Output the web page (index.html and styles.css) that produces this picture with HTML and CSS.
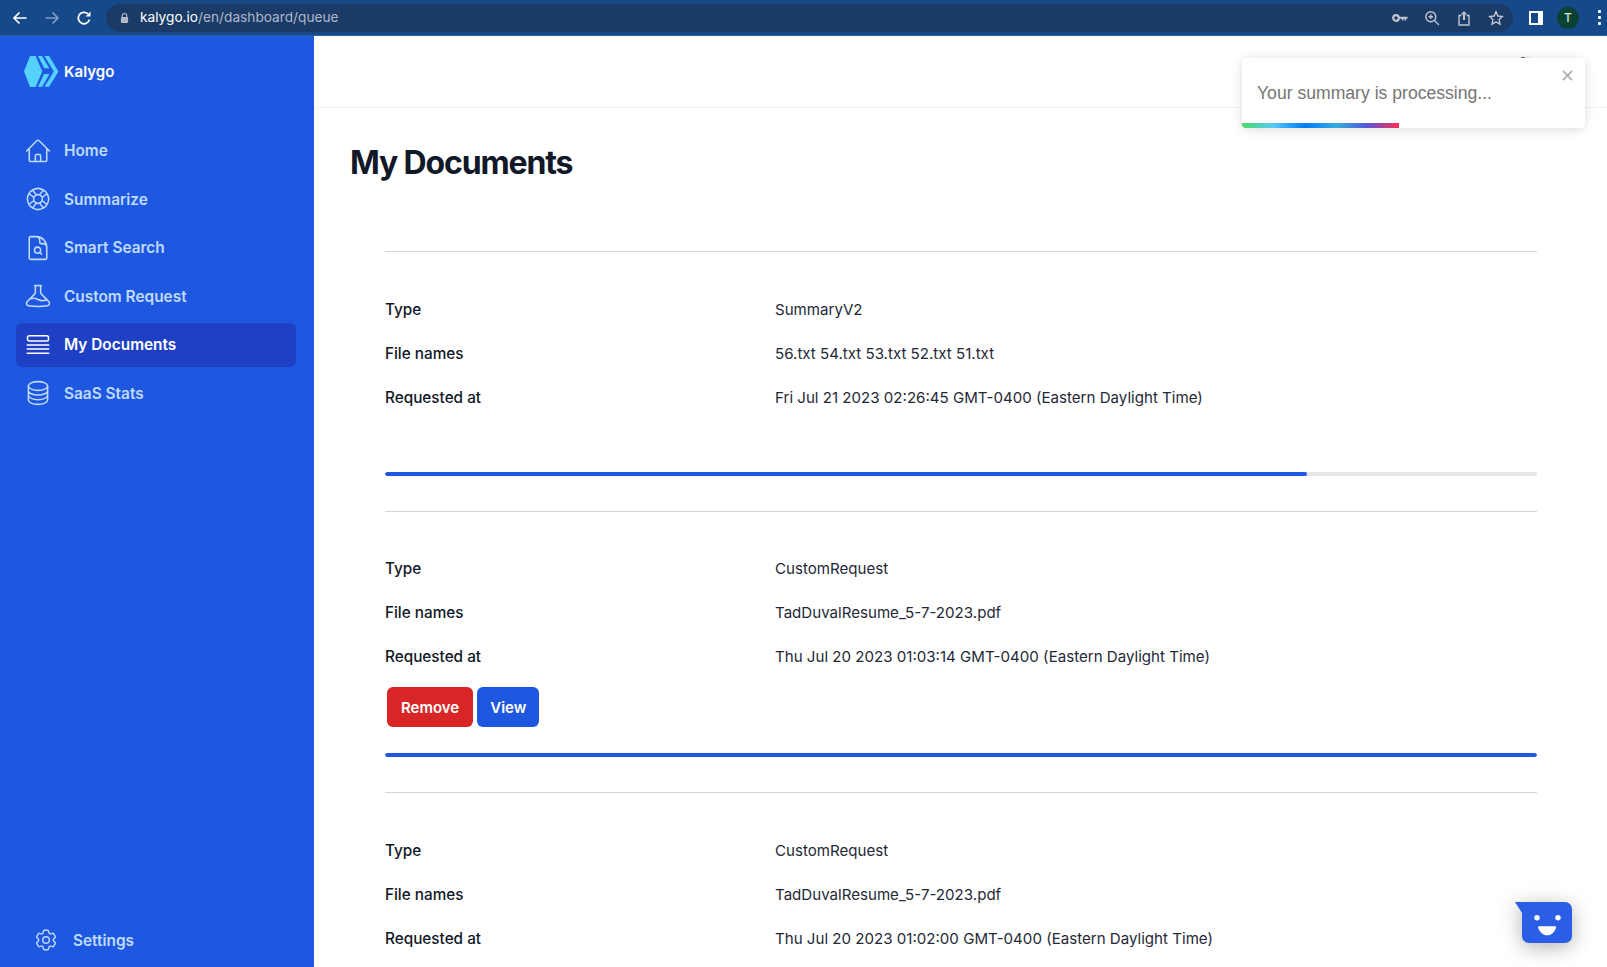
FILE: index.html
```html
<!DOCTYPE html>
<html lang="en">
<head>
<meta charset="utf-8">
<title>Kalygo</title>
<link rel="stylesheet" href="styles.css">
</head>
<body>
<div class="browser-bar">
  <svg class="tb-icon nav-back" viewBox="0 0 16 16"><path d="M14.5 8H2.5M7.5 2.5 2 8l5.5 5.5"/></svg>
  <svg class="tb-icon nav-fwd" viewBox="0 0 16 16"><path d="M1.500 8h12M8.500 2.500 14 8l-5.500 5.500"/></svg>
  <svg class="tb-icon nav-reload" viewBox="0 0 16 16"><path d="M13.500 9.500A5.700 5.700 0 1 1 12 4"/><path class="solid" d="M14.500 1.500v5h-5z"/></svg>
  <div class="omnibox">
    <svg class="lock" viewBox="0 0 10 12"><path d="M2.500 5V3.500a2.500 2.500 0 0 1 5 0V5" class="lock-arc"/><rect x="1" y="5" width="8" height="6.500" rx="1"/></svg>
    <span class="url"><span class="url-host">kalygo.io</span>/en/dashboard/queue</span>
    <div class="omni-actions">
      <svg class="omni-icon" viewBox="0 0 16 16"><circle cx="4" cy="8" r="2.800" class="key-ring"/><path d="M6.500 6.700H15.500V8.700h-1.300v1.800h-1.700V8.700h-1v1.800H9.800V8.700H6.500z" class="solid"/></svg>
      <svg class="omni-icon" viewBox="0 0 16 16"><circle cx="6.800" cy="6.800" r="5"/><path d="m10.500 10.500 4.500 4.500M6.800 4.500v4.600M4.500 6.800h4.600"/></svg>
      <svg class="omni-icon" viewBox="0 0 16 16"><path d="M5.500 5.500H3v9.500h10V5.500h-2.500"/><path class="solid" d="M4.800 4.500 8 1l3.200 3.500H9V10H7V4.500z"/></svg>
      <svg class="omni-icon" viewBox="0 0 16 16"><path d="m8 1.800 1.900 4.200 4.600.5-3.400 3.100.9 4.600L8 11.900l-4 2.300.9-4.600L1.500 6.500l4.600-.5z"/></svg>
    </div>
  </div>
  <div class="side-panel-btn"></div>
  <div class="avatar">T</div>
  <div class="kebab"><i></i><i></i><i></i></div>
</div>

<div class="app">
  <aside class="sidebar">
    <div class="brand">
      <svg class="brand-logo" viewBox="0 0 36 31"><path d="M0 15.500 6 0h5.600l6.700 15.500L11.600 31H6zM14 0h4l7.300 12.300h-5zM20.500 0H25l9.500 15.500L25 30.700h-4.500l9.300-15.200zM20 18h5.500l-7.300 12.700H14z"/></svg>
      <span class="brand-name">Kalygo</span>
    </div>
    <nav class="nav">
      <a class="nav-item">
        <svg class="nav-icon" viewBox="0 0 24 24"><path d="m2.250 12 8.954-8.955a1.125 1.125 0 0 1 1.591 0L21.750 12M4.500 9.750v10.125c0 .621.504 1.125 1.125 1.125H9.750v-4.875c0-.621.504-1.125 1.125-1.125h2.250c.621 0 1.125.504 1.125 1.125V21h4.125c.621 0 1.125-.504 1.125-1.125V9.750M8.250 21h8.250"/></svg>
        Home
      </a>
      <a class="nav-item">
        <svg class="nav-icon" viewBox="0 0 24 24"><path d="M16.712 4.330a9.027 9.027 0 0 1 1.652 1.306c.510.510.944 1.064 1.306 1.652M16.712 4.330l-3.448 4.138m3.448-4.138a9.014 9.014 0 0 0-9.424 0M19.670 7.288l-4.138 3.448m4.138-3.448a9.014 9.014 0 0 1 0 9.424m-4.138-5.976a3.736 3.736 0 0 0-.880-1.388 3.737 3.737 0 0 0-1.388-.880m2.268 2.268a3.765 3.765 0 0 1 0 2.528m-2.268-4.796a3.765 3.765 0 0 0-2.528 0m4.796 4.796c-.181.506-.475.982-.880 1.388a3.736 3.736 0 0 1-1.388.880m2.268-2.268 4.138 3.448m0 0a9.027 9.027 0 0 1-1.306 1.652c-.510.510-1.064.944-1.652 1.306m0 0-3.448-4.138m3.448 4.138a9.014 9.014 0 0 1-9.424 0m5.976-4.138a3.765 3.765 0 0 1-2.528 0m0 0a3.736 3.736 0 0 1-1.388-.880 3.737 3.737 0 0 1-.880-1.388m2.268 2.268L7.288 19.670m0 0a9.024 9.024 0 0 1-1.652-1.306 9.027 9.027 0 0 1-1.306-1.652m0 0 4.138-3.448M4.330 16.712a9.014 9.014 0 0 1 0-9.424m4.138 5.976a3.765 3.765 0 0 1 0-2.528m0 0c.181-.506.475-.982.880-1.388a3.736 3.736 0 0 1 1.388-.880m-2.268 2.268L4.330 7.288m6.406 1.180L7.288 4.330m0 0a9.024 9.024 0 0 0-1.652 1.306A9.025 9.025 0 0 0 4.330 7.288"/></svg>
        Summarize
      </a>
      <a class="nav-item">
        <svg class="nav-icon" viewBox="0 0 24 24"><path d="M19.500 14.250v-2.625a3.375 3.375 0 0 0-3.375-3.375h-1.500A1.125 1.125 0 0 1 13.500 7.125v-1.500a3.375 3.375 0 0 0-3.375-3.375H8.250m5.231 13.481L15 17.250m-4.500-15H5.625c-.621 0-1.125.504-1.125 1.125v17.250c0 .621.504 1.125 1.125 1.125h12.750c.621 0 1.125-.504 1.125-1.125V11.250a9 9 0 0 0-9-9zm3.750 11.625a2.625 2.625 0 1 1-5.250 0 2.625 2.625 0 0 1 5.250 0z"/></svg>
        Smart Search
      </a>
      <a class="nav-item">
        <svg class="nav-icon" viewBox="0 0 24 24"><path d="M9.750 3.104v5.714a2.250 2.250 0 0 1-.659 1.591L5 14.500M9.750 3.104c-.251.023-.501.050-.750.082m.750-.082a24.301 24.301 0 0 1 4.500 0m0 0v5.714c0 .597.237 1.170.659 1.591L19.800 15.300M14.250 3.104c.251.023.501.050.750.082M19.800 15.300l-1.570.393A9.065 9.065 0 0 1 12 15a9.065 9.065 0 0 0-6.230-.693L5 14.500m14.800.8 1.402 1.402c1.232 1.232.650 3.318-1.067 3.611A48.309 48.309 0 0 1 12 21c-2.773 0-5.491-.235-8.135-.687-1.718-.293-2.300-2.379-1.067-3.610L5 14.500"/></svg>
        Custom Request
      </a>
      <a class="nav-item nav-item-active">
        <svg class="nav-icon" viewBox="0 0 24 24"><rect x="3" y="4" width="18" height="4.500" rx="1.500"/><path d="M2.800 12h18.400M2.800 15.500h18.400M2.800 19h18.400"/></svg>
        My Documents
      </a>
      <a class="nav-item">
        <svg class="nav-icon" viewBox="0 0 24 24"><ellipse cx="12" cy="6" rx="8.250" ry="3.750"/><path d="M3.750 6v12c0 2.071 3.694 3.750 8.250 3.750s8.250-1.679 8.250-3.750V6M3.750 10c0 2.071 3.694 3.750 8.250 3.750s8.250-1.679 8.250-3.750M3.750 14c0 2.071 3.694 3.750 8.250 3.750s8.250-1.679 8.250-3.750"/></svg>
        SaaS Stats
      </a>
    </nav>
    <a class="settings">
      <svg class="nav-icon" viewBox="0 0 24 24"><path d="M9.594 3.940c.09-.542.560-.940 1.110-.940h2.593c.550 0 1.020.398 1.110.940l.213 1.281c.063.374.313.686.645.870.074.040.147.083.220.127.324.196.720.257 1.075.124l1.217-.456a1.125 1.125 0 0 1 1.370.490l1.296 2.247a1.125 1.125 0 0 1-.260 1.431l-1.003.827c-.293.240-.438.613-.431.992a6.759 6.759 0 0 1 0 .255c-.007.378.138.750.430.990l1.005.828c.424.350.534.954.260 1.430l-1.298 2.247a1.125 1.125 0 0 1-1.369.491l-1.217-.456c-.355-.133-.750-.072-1.076.124a6.570 6.570 0 0 1-.220.128c-.331.183-.581.495-.644.869l-.213 1.280c-.090.543-.560.941-1.110.941h-2.594c-.550 0-1.020-.398-1.110-.940l-.213-1.281c-.062-.374-.312-.686-.644-.870a6.520 6.520 0 0 1-.220-.127c-.325-.196-.720-.257-1.076-.124l-1.217.456a1.125 1.125 0 0 1-1.369-.490l-1.297-2.247a1.125 1.125 0 0 1 .260-1.431l1.004-.827c.292-.240.437-.613.430-.992a6.932 6.932 0 0 1 0-.255c.007-.378-.138-.750-.430-.990l-1.004-.828a1.125 1.125 0 0 1-.260-1.430l1.297-2.247a1.125 1.125 0 0 1 1.370-.491l1.216.456c.356.133.751.072 1.076-.124.072-.044.146-.087.220-.128.332-.183.582-.495.644-.869l.214-1.281z"/><circle cx="12" cy="12" r="3"/></svg>
      Settings
    </a>
  </aside>

  <main class="main">
    <header class="topbar">
      <div class="user-menu"><span class="user-head"></span></div>
    </header>
    <div class="content">
      <h1 class="page-title">My Documents</h1>
      <ul class="doc-list">
        <li class="doc">
          <dl class="fields">
            <div class="field"><dt>Type</dt><dd>SummaryV2</dd></div>
            <div class="field"><dt>File names</dt><dd>56.txt 54.txt 53.txt 52.txt 51.txt</dd></div>
            <div class="field"><dt>Requested at</dt><dd>Fri Jul 21 2023 02:26:45 GMT-0400 (Eastern Daylight Time)</dd></div>
          </dl>
          <div class="actions-empty"></div>
          <div class="progress"><div class="progress-fill" style="width:80%"></div></div>
        </li>
        <li class="doc doc-with-actions">
          <dl class="fields">
            <div class="field"><dt>Type</dt><dd>CustomRequest</dd></div>
            <div class="field"><dt>File names</dt><dd>TadDuvalResume_5-7-2023.pdf</dd></div>
            <div class="field"><dt>Requested at</dt><dd>Thu Jul 20 2023 01:03:14 GMT-0400 (Eastern Daylight Time)</dd></div>
          </dl>
          <div class="actions">
            <button class="btn btn-red">Remove</button>
            <button class="btn btn-blue">View</button>
          </div>
          <div class="progress"><div class="progress-fill" style="width:100%"></div></div>
        </li>
        <li class="doc">
          <dl class="fields">
            <div class="field"><dt>Type</dt><dd>CustomRequest</dd></div>
            <div class="field"><dt>File names</dt><dd>TadDuvalResume_5-7-2023.pdf</dd></div>
            <div class="field"><dt>Requested at</dt><dd>Thu Jul 20 2023 01:02:00 GMT-0400 (Eastern Daylight Time)</dd></div>
          </dl>
        </li>
      </ul>
    </div>
  </main>
</div>

<div class="toast">
  <span class="toast-close">
    <svg viewBox="0 0 12 12"><path d="M1 1l10 10M11 1 1 11"/></svg>
  </span>
  <p class="toast-text">Your summary is processing...</p>
  <div class="toast-bar"></div>
</div>

<div class="chat">
  <svg viewBox="0 0 57 41"><path d="M0 0h50a7 7 0 0 1 7 7v27a7 7 0 0 1-7 7H14a7 7 0 0 1-7-7V11z" class="chat-body"/><circle cx="22" cy="15.700" r="2.700" class="chat-face"/><circle cx="43" cy="15.700" r="2.700" class="chat-face"/><path d="M24 24.300h16c1 0 1.500.7 1 1.700-1.400 4-4.500 7.300-8.800 7.300S24.800 30 23.200 26c-.500-1 0-1.700.8-1.700z" class="chat-face"/></svg>
</div>
</body>
</html>
```
FILE: styles.css
```css
* { box-sizing: border-box; }
html, body { margin: 0; padding: 0; height: 967px; overflow: hidden; }
body { font-family: Inter, "Liberation Sans", sans-serif; color: #111827; background: #fff; position: relative; }

/* browser chrome */
.browser-bar { height: 36px; background: #15498a; border-bottom: 1px solid #2a5f9e; display: flex; align-items: center; }
.tb-icon { width: 16px; height: 16px; fill: none; stroke: #fff; stroke-width: 1.700; flex: none; }
.tb-icon .solid { fill: #fff; stroke: none; }
.nav-back { margin-left: 12px; }
.nav-fwd { margin-left: 16px; stroke: #7f9cc4; }
.nav-reload { margin-left: 16px; }
.omnibox { margin-left: 14px; width: 1407px; flex: none; height: 28px; border-radius: 14px; background: #1a3b67; display: flex; align-items: center; padding: 0 9px 0 14px; }
.lock { width: 9px; height: 12px; fill: #b3b9c4; flex: none; }
.lock-arc { fill: none; stroke: #b3b9c4; stroke-width: 1.300; }
.url { margin-left: 11px; font-size: 13.700px; color: #aeb8c7; white-space: nowrap; position: relative; top: -1px; }
.url-host { color: #fff; }
.omni-actions { margin-left: auto; display: flex; gap: 16px; align-items: center; }
.omni-icon { width: 16px; height: 16px; fill: none; stroke: #c0c5cd; stroke-width: 1.400; flex: none; }
.omni-icon .solid { fill: #c0c5cd; stroke: none; }
.omni-icon .key-ring { stroke-width: 2.200; }
.side-panel-btn { margin-left: 16px; width: 14px; height: 14px; background-color: #15498a; border: 2px solid #fff; border-right-width: 5px; flex: none; }
.avatar { margin-left: 14px; width: 22px; height: 22px; border-radius: 50%; background: #0b4133; color: #cfe3da; font-size: 12px; font-weight: 500; display: flex; align-items: center; justify-content: center; flex: none; }
.kebab { margin-left: 19px; display: flex; flex-direction: column; gap: 3px; flex: none; }
.kebab i { display: block; width: 3px; height: 3px; border-radius: 1px; background: #fff; }

/* layout */
.app { display: flex; height: 931px; }
.sidebar { width: 314px; flex: none; background: #1f58e0; display: flex; flex-direction: column; padding: 0 18px 0 16px; }
.brand { display: flex; align-items: center; height: 34px; margin: 18px 0 0 8px; gap: 4px; }
.brand-logo { width: 36px; height: 31px; fill: #55d2fb; flex: none; }
.brand-name { color: #fff; font-size: 15px; font-weight: 600; }
.nav { margin-top: 40.500px; display: flex; flex-direction: column; gap: 4.500px; }
.nav-item { height: 44px; display: flex; align-items: center; padding-left: 8px; gap: 12px; border-radius: 6px; color: #bfdbfe; font-size: 15.400px; font-weight: 600; }
.nav-item-active { background: #1d40c4; color: #fff; }
.nav-item-active .nav-icon { stroke: #fff; }
.nav-icon { width: 28px; height: 28px; fill: none; stroke: #bfdbfe; stroke-width: 1.300; stroke-linecap: round; stroke-linejoin: round; flex: none; }
.settings { margin-top: auto; margin-bottom: 5px; height: 44px; display: flex; align-items: center; padding-left: 17px; gap: 14px; color: #bfdbfe; font-size: 15.400px; font-weight: 600; }
.settings .nav-icon { width: 26px; height: 26px; }

.main { flex: 1; min-width: 0; }
.topbar { height: 72px; border-bottom: 1px solid #f3f4f6; display: flex; justify-content: flex-end; padding: 20px 66px 0 0; }
.user-menu { width: 30px; height: 30px; border-radius: 50%; background: #f3f4f6; display: flex; justify-content: center; }
.user-head { width: 6px; height: 8px; background: #4b5563; margin-right: 6px; margin-top: 1px; border-radius: 3px; }
.content { padding: 35px 36px 0; }
.page-title { margin: 0; font-size: 32px; line-height: 40px; font-weight: 700; letter-spacing: -1.150px; color: #111827; }
.doc-list { list-style: none; margin: 68px 0 0; padding: 0 34px 0 35px; }
.doc { border-top: 1px solid #d1d5db; padding-top: 35px; padding-bottom: 35px; }
.doc-with-actions { padding-top: 34px; }
.fields { margin: 0; }
.field { display: grid; grid-template-columns: 390px 1fr; height: 44px; align-items: center; }
.field dt { font-size: 15.300px; font-weight: 500; color: #111827; }
.field dd { margin: 0; font-size: 15.100px; color: #1f2937; }
.actions-empty { height: 53px; }
.actions { display: flex; gap: 4px; margin-top: 9px; padding-left: 2px; height: 40px; margin-bottom: 26px; }
.btn { border: 0; height: 40px; border-radius: 6px; padding: 0 13px; color: #fff; font-family: inherit; font-size: 15px; font-weight: 600; }
.btn-red { background: #d82626; padding: 0 14px; }
.btn-blue { background: #1f58e0; }
.progress { height: 4px; border-radius: 2px; background: #e5e7eb; overflow: hidden; }
.progress-fill { height: 100%; background: #1f58e0; border-radius: 2px; }

/* overlays */
.toast { position: absolute; left: 1242px; top: 58px; width: 343px; height: 70px; background: #fff; border-radius: 4px; box-shadow: 0 1px 10px rgba(0,0,0,.1), 0 2px 15px rgba(0,0,0,.05); overflow: hidden; }
.toast-text { margin: 0; padding: 25px 15px 0; font-family: "Liberation Sans", Arial, sans-serif; font-size: 17.600px; line-height: 21px; color: #757575; }
.toast-close { position: absolute; right: 12px; top: 12px; width: 11px; height: 11px; display: flex; }
.toast-close svg { width: 11px; height: 11px; fill: none; stroke: #b0b0b0; stroke-width: 2; }
.toast-bar { position: absolute; left: 0; bottom: 0; width: 157px; height: 5px; background: linear-gradient(to right, #4cd964, #5ac8fa, #007aff, #34aadc, #5856d6, #ff2d55); }
.chat { position: absolute; left: 1515px; top: 902px; width: 57px; height: 41px; filter: drop-shadow(0 4px 10px rgba(0,0,0,.3)); }
.chat svg { display: block; width: 57px; height: 41px; }
.chat-body { fill: #2a5ee4; }
.chat-face { fill: #fff; }
```
